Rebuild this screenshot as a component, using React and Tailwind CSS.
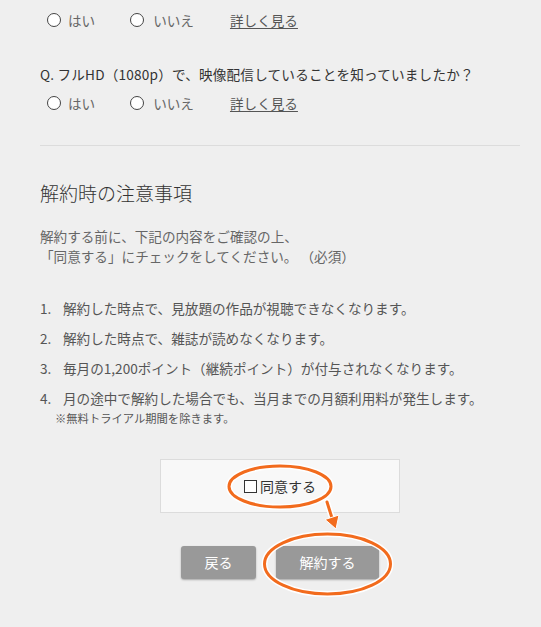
import React from 'react';

const font = "font-['Noto_Sans_CJK_JP','Noto_Sans',sans-serif]";

const RadioRow = () => (
  <div className="h-[20px] flex items-center pl-[7px] text-[13.6px] text-[#666]">
    <span className="w-[14px] h-[14px] rounded-full border-[1.5px] border-[#444] bg-white" />
    <span className="ml-[7px]">はい</span>
    <span className="ml-[35px] w-[14px] h-[14px] rounded-full border-[1.5px] border-[#444] bg-white" />
    <span className="ml-[9px]">いいえ</span>
    <a className="ml-[36px] underline underline-offset-2 text-[#555]">詳しく見る</a>
  </div>
);

const notes = [
  '解約した時点で、見放題の作品が視聴できなくなります。',
  '解約した時点で、雑誌が読めなくなります。',
  '毎月の1,200ポイント（継続ポイント）が付与されなくなります。',
  '月の途中で解約した場合でも、当月までの月額利用料が発生します。',
];

export default function App() {
  return (
    <div className={`w-[541px] h-[627px] overflow-hidden bg-[#efefef] ${font}`}>
      <div className="pl-[40px] pr-[21px]">
        <div className="pt-[10px]">
          <RadioRow />
        </div>

        <p className="mt-[34px] leading-[20px] text-[13.6px] tracking-[0.2px] text-[#333]">
          Q. フルHD（1080p）で、映像配信していることを知っていましたか？
        </p>
        <div className="mt-[9px]">
          <RadioRow />
        </div>

        <div className="mt-[32px] border-t border-[#dcdcdc]" />

        <h2 className="mt-[33px] leading-[28px] text-[19px] font-light text-[#333]">解約時の注意事項</h2>

        <p className="mt-[19px] leading-[20px] text-[13.6px] text-[#666]">
          解約する前に、下記の内容をご確認の上、
          <br />
          「同意する」にチェックをしてください。 （必須）
        </p>

        <ol className="mt-[27px] text-[13.6px] text-[#555]">
          {notes.map((t, i) => (
            <li key={i} className="flex py-[5px] leading-[20px] last:pb-0">
              <span className="w-[23px] shrink-0">{i + 1}.</span>
              <div>
                {t}
                {i === 3 && (
                  <p className="-ml-[8px] leading-[20px] text-[11.3px] text-[#555]">※無料トライアル期間を除きます。</p>
                )}
              </div>
            </li>
          ))}
        </ol>

        <div className="relative mt-[31px]">
          <div className="mx-auto w-[240px] h-[54px] bg-[#f8f8f8] border border-[#dcdcdc] flex items-center justify-center text-[14px] text-[#333]">
            <span className="w-[13px] h-[13px] border-[1.5px] border-[#333] bg-white mr-[3px]" />
            同意する
          </div>

          <div className="mt-[33px] flex justify-center gap-[20px]">
            <button className="w-[75px] h-[33px] rounded-[3px] bg-[#999] text-white text-[14px] shadow-[0_1px_2px_rgba(0,0,0,0.3)]">戻る</button>
            <button className="w-[103px] h-[33px] rounded-[3px] bg-[#999] text-white text-[14px] shadow-[0_1px_2px_rgba(0,0,0,0.3)]">解約する</button>
          </div>

          <svg className="absolute left-0 top-0 pointer-events-none" width="480" height="150" viewBox="0 0 480 150">
            <g fill="none" strokeLinecap="round">
              <ellipse cx="240" cy="27.5" rx="51" ry="20.5" stroke="#fff" strokeWidth="6" />
              <ellipse cx="287.5" cy="105" rx="63" ry="30" stroke="#fff" strokeWidth="6" />
              <line x1="287" y1="43" x2="292" y2="59" stroke="#fff" strokeWidth="6" />
              <ellipse cx="240" cy="27.5" rx="51" ry="20.5" stroke="#f26b1d" strokeWidth="3" />
              <ellipse cx="287.5" cy="105" rx="63" ry="30" stroke="#f26b1d" strokeWidth="3" />
              <line x1="287" y1="43" x2="292" y2="59" stroke="#f26b1d" strokeWidth="3" />
            </g>
            <polygon points="296,70 285,60.5 299,56" fill="#f26b1d" stroke="#fff" strokeWidth="1" strokeLinejoin="round" />
          </svg>
        </div>
      </div>
    </div>
  );
}
